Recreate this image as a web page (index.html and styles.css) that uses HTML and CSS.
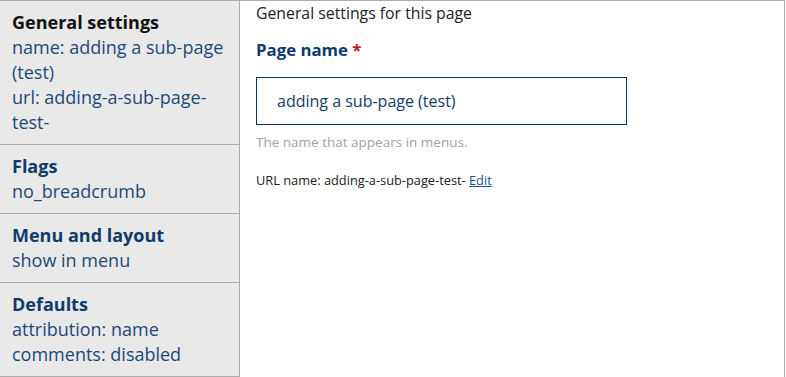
FILE: index.html
```html
<!DOCTYPE html>
<html>
<head>
<meta charset="utf-8">
<link rel="stylesheet" href="styles.css">
</head>
<body>
<div class="frame">
  <nav class="sidebar">
    <div class="section active">
      <div class="title">General settings</div>
      <div class="value">name: adding a sub-page (test)</div>
      <div class="value">url: adding-a-sub-page-test-</div>
    </div>
    <div class="section">
      <div class="title">Flags</div>
      <div class="value">no_breadcrumb</div>
    </div>
    <div class="section">
      <div class="title">Menu and layout</div>
      <div class="value">show in menu</div>
    </div>
    <div class="section">
      <div class="title">Defaults</div>
      <div class="value">attribution: name</div>
      <div class="value">comments: disabled</div>
    </div>
  </nav>
  <main class="main">
    <div class="intro">General settings for this page</div>
    <label class="label">Page name <span class="req">*</span></label>
    <div class="input">adding a sub-page (test)</div>
    <div class="help">The name that appears in menus.</div>
    <div class="url">URL name: adding-a-sub-page-test- <a href="#" class="edit">Edit</a></div>
  </main>
</div>
</body>
</html>
```

FILE: styles.css
```css
html, body {
  margin: 0;
  padding: 0;
  background: #fff;
  font-family: "Open Sans", "Liberation Sans", sans-serif;
}
.frame {
  display: flex;
  width: 785px;
  height: 377px;
  box-sizing: border-box;
  border-top: 1px solid #acacac;
  border-right: 1px solid #acacac;
}
.sidebar {
  width: 240px;
  box-sizing: border-box;
  background: #e9e9e9;
  border-right: 1px solid #acacac;
  display: flex;
  flex-direction: column;
}
.section {
  padding: 9px 10px 9px 12px;
  border-bottom: 1px solid #acacac;
  font-size: 18px;
  line-height: 25px;
}
.title {
  font-weight: 700;
  color: #0d3c6c;
}
.section.active .title {
  color: #111;
}
.value {
  color: #1c4a7a;
}
.main {
  flex: 1;
  padding-left: 16px;
  display: flex;
  flex-direction: column;
  align-items: flex-start;
}
.intro {
  font-size: 15.8px;
  line-height: 20px;
  margin-top: 2px;
  color: #222;
}
.label {
  font-size: 16.8px;
  line-height: 22px;
  font-weight: 700;
  color: #0d3c6c;
  margin-top: 16px;
}
.req {
  color: #c0121b;
}
.input {
  margin-top: 16px;
  width: 371px;
  height: 48px;
  box-sizing: border-box;
  border: 1px solid #0b3354;
  padding-left: 20px;
  font-size: 16px;
  line-height: 46px;
  color: #143c66;
}
.help {
  margin-top: 8px;
  font-size: 13.5px;
  line-height: 18px;
  color: #a4a4a4;
}
.url {
  margin-top: 20px;
  font-size: 12.8px;
  line-height: 18px;
  color: #222;
}
.edit {
  color: #1a4f8f;
  text-decoration: underline;
}
```
